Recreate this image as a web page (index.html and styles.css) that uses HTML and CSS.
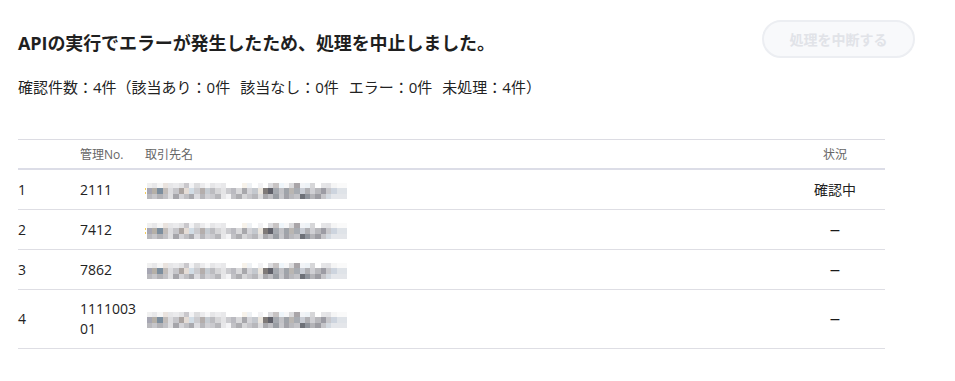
FILE: index.html
```html
<!DOCTYPE html>
<html lang="ja">
<head>
<meta charset="utf-8">
<title>API実行エラー</title>
<link rel="stylesheet" href="styles.css">
</head>
<body>
<div class="page">
  <div class="header">
    <h1 class="title">APIの実行でエラーが発生したため、処理を中止しました。</h1>
    <button class="abort-btn" disabled>処理を中断する</button>
  </div>
  <p class="summary"><span class="seg">確認件数：4件（該当あり：0件</span><span class="seg">該当なし：0件</span><span class="seg">エラー：0件</span><span class="seg">未処理：4件）</span></p>
  <table class="result-table">
    <thead>
      <tr>
        <th class="col-idx"></th>
        <th class="col-no">管理No.</th>
        <th class="col-name">取引先名</th>
        <th class="col-status">状況</th>
      </tr>
    </thead>
    <tbody>
      <tr>
        <td class="col-idx">1</td>
        <td class="col-no">2111</td>
        <td class="col-name"><span class="dot"></span><span class="masked"></span></td>
        <td class="col-status">確認中</td>
      </tr>
      <tr>
        <td class="col-idx">2</td>
        <td class="col-no">7412</td>
        <td class="col-name"><span class="dot"></span><span class="masked"></span></td>
        <td class="col-status"><span class="dash">–</span></td>
      </tr>
      <tr>
        <td class="col-idx">3</td>
        <td class="col-no">7862</td>
        <td class="col-name"><span class="dot blank"></span><span class="masked"></span></td>
        <td class="col-status"><span class="dash">–</span></td>
      </tr>
      <tr>
        <td class="col-idx">4</td>
        <td class="col-no">111100301</td>
        <td class="col-name"><span class="dot blank"></span><span class="masked"></span></td>
        <td class="col-status"><span class="dash">–</span></td>
      </tr>
    </tbody>
  </table>
</div>
</body>
</html>
```
FILE: styles.css
```css
* { box-sizing: border-box; }

html, body {
  margin: 0;
  background: #ffffff;
}

body {
  font-family: "Open Sans", "Noto Sans CJK JP", sans-serif;
  color: #222222;
}

.page {
  padding: 20px 40px 0 18px;
}

.header {
  display: flex;
  justify-content: space-between;
  align-items: flex-start;
}

.title {
  margin: 10px 0 0;
  font-size: 18px;
  line-height: 26px;
  font-weight: 700;
  letter-spacing: -0.1px;
  color: #1f1f1f;
}

.abort-btn {
  width: 153px;
  height: 38px;
  border: 2px solid #eceef2;
  border-radius: 19px;
  background: #f8f9fb;
  color: #e1e3e8;
  font-family: "Noto Sans CJK JP", sans-serif;
  font-size: 14px;
  font-weight: 700;
  padding: 0;
}

.summary {
  margin: 18px 0 0;
  font-size: 15px;
  line-height: 22px;
  color: #222222;
  display: flex;
}

.seg + .seg {
  margin-left: 10px;
}

.result-table {
  margin-top: 41px;
  width: calc(100% - 30px);
  border-collapse: separate;
  border-spacing: 0;
  table-layout: fixed;
}

.result-table th {
  height: 31px;
  padding: 0;
  font-size: 12px;
  font-weight: 400;
  color: #666666;
  text-align: left;
  vertical-align: middle;
  border-top: 1px solid #dcdce3;
  border-bottom: 2px solid #dcdde7;
}

.result-table td {
  height: 40px;
  padding: 9px 0;
  font-size: 14px;
  line-height: 20px;
  color: #222222;
  vertical-align: middle;
  border-bottom: 1px solid #dedee4;
}

.col-idx { width: 62px; }

.result-table .col-no {
  width: 65px;
  padding-right: 5px;
  word-break: break-all;
}

.result-table .col-status {
  width: 100px;
  text-align: center;
}

.dash {
  font-family: "Liberation Sans", sans-serif;
  font-size: 16px;
  line-height: 20px;
  color: #1a1a1a;
}

.col-name {
  white-space: nowrap;
}

.dot {
  display: inline-block;
  width: 1px;
  height: 8px;
  margin-right: 1px;
  vertical-align: middle;
  background: linear-gradient(#fff 0 1px, #f6cf5a 1px 3px, #fff 3px 5px, #f6cf5a 5px 7px, #fff 7px);
}

.dot.blank {
  background: transparent;
}

.masked {
  display: inline-block;
  width: 200px;
  height: 16px;
  vertical-align: middle;
  background-image:
    linear-gradient(90deg,
      #f0f0f0 0 5.3px, #e8e8ea 5.3px 10.5px, #f6f6f6 10.5px 15.8px, #eae3de 15.8px 21px,
      #e6e6e8 21px 26.3px, #ebebed 26.3px 31.6px, #e3e3e5 31.6px 36.8px, #c9c7cb 36.8px 42.1px,
      #f3f3f5 42.1px 47.4px, #dcdcde 47.4px 52.6px, #ebebed 52.6px 57.9px, #f7f7f8 57.9px 63.2px,
      #e6e6e8 63.2px 68.4px, #ededef 68.4px 73.7px, #e8e8ea 73.7px 78.9px, #ffffff 78.9px 94.7px,
      #f7f2ea 94.7px 100px, #eef1f4 100px 105.3px, #ffffff 105.3px 110.5px, #f2f2f4 110.5px 115.8px,
      #ffffff 115.8px 121px, #dcdcdf 121px 126.3px, #c7c3c3 126.3px 131.6px, #eef5fa 131.6px 136.8px,
      #f7f7f8 136.8px 142.1px, #dadadc 142.1px 147.4px, #a9a5a8 147.4px 152.6px, #f2f4f7 152.6px 157.9px,
      #edf2f6 157.9px 163.2px, #d6d6d8 163.2px 168.4px, #ffffff 168.4px 173.7px, #e6e6e8 173.7px 178.9px,
      #e3e3e6 178.9px 184.2px, #f5f5f5 184.2px 189.5px, #fafafa 189.5px 200px),
    linear-gradient(90deg,
      #a6a6b2 0 5.3px, #b5b0a8 5.3px 10.5px, #7c8e9e 10.5px 15.8px, #c2bdba 15.8px 21px,
      #dcdcdf 21px 26.3px, #c6c6ca 26.3px 31.6px, #aaa3a0 31.6px 36.8px, #e4dcd6 36.8px 42.1px,
      #d2dde6 42.1px 47.4px, #cbcbcf 47.4px 52.6px, #b4aeac 52.6px 57.9px, #c6ccd2 57.9px 63.2px,
      #bcbcc0 63.2px 68.4px, #d6d6d8 68.4px 73.7px, #e4e4e6 73.7px 78.9px, #cacace 78.9px 84.2px,
      #babac0 84.2px 89.5px, #d9d9db 89.5px 94.7px, #a8a8ac 94.7px 100px, #d4d4d8 100px 105.3px,
      #c4c8ce 105.3px 110.5px, #ebe6de 110.5px 115.8px, #7f7a78 115.8px 121px, #5f6069 121px 126.3px,
      #a5a9af 126.3px 131.6px, #c2c2c6 131.6px 136.8px, #9fa3a9 136.8px 142.1px, #bab6b2 142.1px 147.4px,
      #a8acb2 147.4px 152.6px, #c9cdd5 152.6px 157.9px, #b0b0b4 157.9px 163.2px, #d0d0d4 163.2px 168.4px,
      #b8b8bc 168.4px 173.7px, #9c9ca4 173.7px 178.9px, #c8c8cc 178.9px 184.2px, #cdd4de 184.2px 189.5px,
      #dfe3e8 189.5px 200px),
    linear-gradient(90deg,
      #b9b9bd 0 5.3px, #c6c6ca 5.3px 10.5px, #b2b2b6 10.5px 15.8px, #c2c2c6 15.8px 21px,
      #dedee0 21px 26.3px, #a5a5aa 26.3px 31.6px, #d3d3d7 31.6px 36.8px, #c0c0c4 36.8px 42.1px,
      #a9a9ae 42.1px 47.4px, #dcdce0 47.4px 52.6px, #b7b7bb 52.6px 57.9px, #d1d1d5 57.9px 63.2px,
      #cacace 63.2px 68.4px, #b6b6ba 68.4px 73.7px, #e7e7e9 73.7px 78.9px, #f4f4f6 78.9px 84.2px,
      #c2c2c6 84.2px 89.5px, #adadb1 89.5px 94.7px, #d6d6d8 94.7px 100px, #c6c6ca 100px 105.3px,
      #b7b7bb 105.3px 110.5px, #dcdcde 110.5px 115.8px, #a8a8ac 115.8px 121px, #bebec2 121px 126.3px,
      #999da3 126.3px 131.6px, #c6c6ca 131.6px 136.8px, #a2a2a8 136.8px 142.1px, #b9b9bd 142.1px 147.4px,
      #c3c3c7 147.4px 152.6px, #6e7178 152.6px 157.9px, #8f949c 157.9px 163.2px, #b4b4b8 163.2px 168.4px,
      #9c9ca2 168.4px 173.7px, #c5c5c9 173.7px 178.9px, #d3d9e0 178.9px 184.2px, #e4e6ea 184.2px 200px);
  background-size: 200px 5px, 200px 6px, 200px 5px;
  background-position: 0 0, 0 5px, 0 11px;
  background-repeat: no-repeat;
}
```
